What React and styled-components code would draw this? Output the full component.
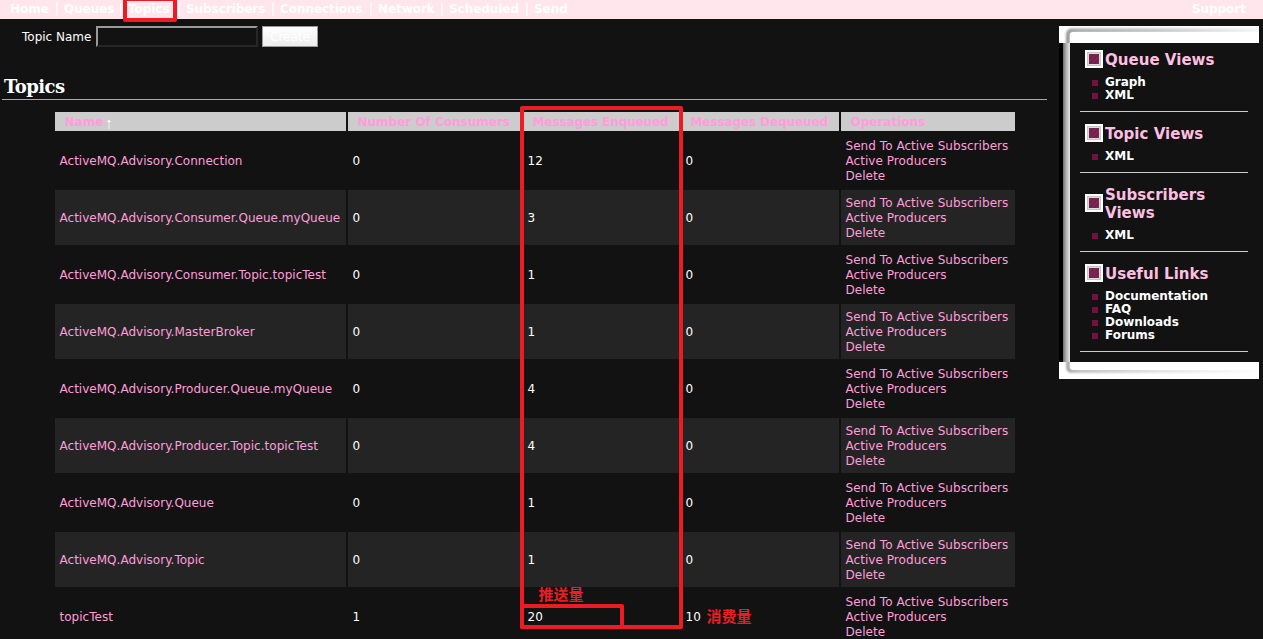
import React from 'react';
import styled, { createGlobalStyle } from 'styled-components';

const GlobalStyle = createGlobalStyle`
  * { box-sizing: border-box; }
  html, body { margin: 0; background: #121212; }
  body { height: 639px; overflow: hidden; }
`;

const sans = `'DejaVu Sans', sans-serif`;

const Page = styled.div`
  position: relative;
  width: 1263px;
  height: 639px;
  overflow: hidden;
  background: #121212;
  color: #fff;
  font: 12px/15px ${sans};
`;

const NavBar = styled.nav`
  display: flex;
  justify-content: space-between;
  height: 19px;
  padding: 0 17px 0 10px;
  background: #ffe5ec;
  font-weight: bold;
  line-height: 18px;
`;

const NavLinks = styled.div`
  display: flex;
`;

const NavItem = styled.span`
  display: flex;
  justify-content: space-between;
  width: ${(p) => p.$width}px;
  padding-right: 5px;
  letter-spacing: -0.05px;
`;

const Columns = styled.div`
  display: flex;
  justify-content: space-between;
  padding: 7px 4px 0 2px;
`;

const Main = styled.main`
  width: 1045px;
`;

const CreateForm = styled.div`
  display: flex;
  height: 21px;
  padding-left: 20px;
`;

const FieldLabel = styled.label`
  width: 74px;
  line-height: 22px;
`;

const TextField = styled.input`
  width: 162px;
  height: 21px;
  margin: 0 4px 0 0;
  padding: 0;
  background: #121212;
  border: 2px solid;
  border-color: #999 #272727 #272727 #999;
  border-radius: 0;
`;

const CreateButton = styled.button`
  width: 56px;
  height: 21px;
  padding: 0;
  border: 1px solid #999;
  background: linear-gradient(#fff, #ececec);
  color: #fff;
  font: 12px ${sans};
`;

const Title = styled.h1`
  margin: 29px 0 12px;
  height: 24px;
  padding-left: 2px;
  border-bottom: 1px solid #aaa;
  font: bold 18px/22px 'DejaVu Serif', serif;
  letter-spacing: -0.55px;
`;

const Table = styled.div`
  display: grid;
  gap: 2px;
  padding-left: 53px;
`;

const Row = styled.div`
  display: grid;
  grid-template-columns: 291px 173px 156px 158px 174px;
  column-gap: 2px;
`;

const HeaderCell = styled.div`
  height: 19px;
  padding-left: 9.5px;
  background: #ccc;
  color: #ff9ddb;
  font-weight: bold;
  line-height: 20px;
  white-space: nowrap;
  letter-spacing: ${(p) => p.$spacing}px;
`;

const SortArrow = styled.span`
  display: inline-block;
  margin-left: 2px;
  color: #fff;
  font: 15px/15px 'Liberation Serif', serif;
  vertical-align: -2px;
`;

const Cell = styled.div`
  display: flex;
  flex-direction: column;
  justify-content: center;
  height: 55px;
  padding: 1px 0 0 4.5px;
  background: ${(p) => (p.$striped ? '#242424' : '#121212')};
  color: ${(p) => (p.$link ? '#ff9ddb' : '#fff')};
  white-space: nowrap;
  letter-spacing: ${(p) => p.$spacing || 0}px;
`;

const Sidebar = styled.aside`
  width: 200px;
  height: 353px;
`;

const SidebarBody = styled.div`
  height: 319px;
  padding: 7px 11px 0 21px;
  background: linear-gradient(90deg, #000 4px, #6c6c6c 4px, #999 6px, #ccc 9px, #e2e2e2 11px, #121212 11px);
`;

const Cap = styled.svg`
  display: block;
`;

const Section = styled.section`
  padding: 0 0 10px;
  margin-bottom: 12px;
  border-bottom: 1px solid #ccc;
`;

const SectionHead = styled.div`
  display: flex;
  align-items: center;
  gap: 2px;
  margin-bottom: 7px;
  padding-left: 5px;
  color: #ffbfe0;
  font: bold 15px/18px ${sans};

  svg { flex: none; }
`;

const SectionTitle = styled.span`
  padding-top: 1px;
  margin-bottom: -1px;
  letter-spacing: 0.03px;
`;

const LinkItem = styled.div`
  display: flex;
  align-items: center;
  gap: 7px;
  height: 13px;
  padding-left: 12px;
  font-weight: bold;
  line-height: 13px;
  letter-spacing: -0.03px;

  &::before {
    content: '';
    width: 6px;
    height: 6px;
    margin-top: 3px;
    background: #74113f;
  }
`;

const LinkText = styled.span`
  padding-top: 1px;
  margin-bottom: -1px;
`;

const Marker = styled.div`
  position: absolute;
  left: ${(p) => p.$x}px;
  top: ${(p) => p.$y}px;
  width: ${(p) => p.$w}px;
  height: ${(p) => p.$h}px;
  border: 4px solid #ed1c24;
  border-radius: 2px;
`;

const Note = styled.div`
  position: absolute;
  left: ${(p) => p.$x}px;
  top: ${(p) => p.$y}px;
  color: #ed1c24;
  font: bold 15px/18px 'Noto Sans CJK SC', sans-serif;
`;

const nav = [
  ['Home', 54], ['Queues', 64], ['Topics', 58], ['Subscribers', 94],
  ['Connections', 98], ['Network', 71], ['Scheduled', 85], ['Send', 45],
];

const headers = [
  ['Name', 0], ['Number Of Consumers', 0], ['Messages Enqueued', -0.1],
  ['Messages Dequeued', -0.1], ['Operations', 0],
];

const topics = [
  ['ActiveMQ.Advisory.Connection', 0, 12, 0],
  ['ActiveMQ.Advisory.Consumer.Queue.myQueue', 0, 3, 0],
  ['ActiveMQ.Advisory.Consumer.Topic.topicTest', 0, 1, 0],
  ['ActiveMQ.Advisory.MasterBroker', 0, 1, 0],
  ['ActiveMQ.Advisory.Producer.Queue.myQueue', 0, 4, 0],
  ['ActiveMQ.Advisory.Producer.Topic.topicTest', 0, 4, 0],
  ['ActiveMQ.Advisory.Queue', 0, 1, 0],
  ['ActiveMQ.Advisory.Topic', 0, 1, 0],
  ['topicTest', 1, 20, 10],
];

const sections = [
  ['Queue Views', ['Graph', 'XML']],
  ['Topic Views', ['XML']],
  ['Subscribers Views', ['XML']],
  ['Useful Links', ['Documentation', 'FAQ', 'Downloads', 'Forums']],
];

function SectionIcon() {
  return (
    <svg width="18" height="18">
      <rect width="18" height="18" fill="#fff" />
      <rect x="2.5" y="2.5" width="13" height="13" fill="#ddd" stroke="#c4c4c4" />
      <rect x="4" y="4" width="10" height="10" fill="#7a2650" />
      <path d="M4 9l5-5M4 14L14 4M9 14l5-5" stroke="#651a42" strokeWidth=".8" />
    </svg>
  );
}

function PanelCap({ flipped }) {
  return (
    <Cap width="200" height="17" viewBox="0 0 200 17">
      <defs>
        <linearGradient id="edge" gradientUnits="userSpaceOnUse" x1="0" x2="200" y1="0" y2="0">
          <stop stopColor="#8c8c8c" />
          <stop offset=".1" stopColor="#a8a8a8" />
          <stop offset=".5" stopColor="#c4c4c4" />
          <stop offset="1" stopColor="#f6f6f6" />
        </linearGradient>
        <linearGradient id="edgeLow" gradientUnits="userSpaceOnUse" x1="0" x2="200" y1="0" y2="0">
          <stop stopColor="#8c8c8c" />
          <stop offset=".1" stopColor="#bbb" />
          <stop offset=".5" stopColor="#e0e0e0" />
          <stop offset="1" stopColor="#fff" />
        </linearGradient>
        <filter id="soft" filterUnits="userSpaceOnUse" x="0" y="-4" width="206" height="30">
          <feGaussianBlur stdDeviation="1" />
        </filter>
      </defs>
      <rect width="200" height="17" fill="#fff" />
      <g transform={flipped ? 'translate(0 17) scale(1 -1)' : undefined}>
        <path
          d={flipped ? 'M9 24V12Q9 8 13 8H204' : 'M9 24V9Q9 4.5 13 4.5H204'}
          fill="none"
          stroke={flipped ? 'url(#edgeLow)' : 'url(#edge)'}
          strokeWidth={flipped ? 3.5 : 4}
          filter="url(#soft)"
        />
        <path d={flipped ? 'M11 17V12Q11 9 14 9H200V17Z' : 'M11 17V9Q11 6 14 6H200V17Z'} fill="#fff" />
      </g>
    </Cap>
  );
}

export default function App() {
  return (
    <Page>
      <GlobalStyle />
      <NavBar>
        <NavLinks>
          {nav.map(([label, width], i) => (
            <NavItem key={label} $width={width}>
              <span>{label}</span>
              {i < nav.length - 1 && <span>|</span>}
            </NavItem>
          ))}
        </NavLinks>
        <span>Support</span>
      </NavBar>
      <Columns>
        <Main>
          <CreateForm>
            <FieldLabel>Topic Name</FieldLabel>
            <TextField />
            <CreateButton>Create</CreateButton>
          </CreateForm>
          <Title>Topics</Title>
          <Table>
            <Row>
              {headers.map(([label, spacing], i) => (
                <HeaderCell key={label} $spacing={spacing}>
                  {label}{i === 0 && <SortArrow>↑</SortArrow>}
                </HeaderCell>
              ))}
            </Row>
            {topics.map(([name, ...counts], i) => (
              <Row key={name}>
                <Cell $link $striped={i % 2 === 1} $spacing={0.02}>{name}</Cell>
                {counts.map((c, j) => <Cell key={j} $striped={i % 2 === 1}>{c}</Cell>)}
                <Cell $link $striped={i % 2 === 1} $spacing={0.05}>
                  <span>Send To Active Subscribers</span>
                  <span>Active Producers</span>
                  <span>Delete</span>
                </Cell>
              </Row>
            ))}
          </Table>
        </Main>
        <Sidebar>
          <PanelCap />
          <SidebarBody>
            {sections.map(([title, links]) => (
              <Section key={title}>
                <SectionHead><SectionIcon /><SectionTitle>{title}</SectionTitle></SectionHead>
                {links.map((l) => <LinkItem key={l}><LinkText>{l}</LinkText></LinkItem>)}
              </Section>
            ))}
          </SidebarBody>
          <PanelCap flipped />
        </Sidebar>
      </Columns>
      <Marker $x={123} $y={-3} $w={54} $h={25} />
      <Marker $x={520} $y={106} $w={163} $h={523} />
      <Marker $x={520} $y={604} $w={104} $h={25} />
      <Note $x={538.5} $y={585}>推送量</Note>
      <Note $x={706.5} $y={607}>消费量</Note>
    </Page>
  );
}
